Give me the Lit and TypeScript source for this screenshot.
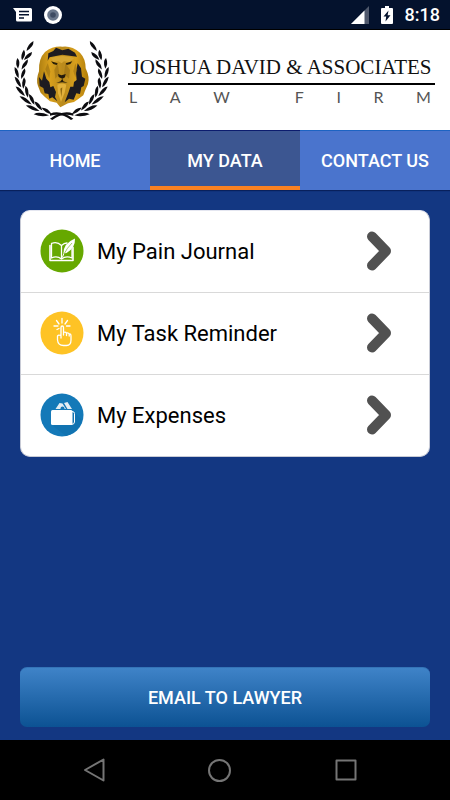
import { LitElement, html, css, svg } from "lit";
import { customElement, property } from "lit/decorators.js";

// Laurel leaves of the left branch: centre x, centre y, direction in degrees, half length.
const LEAVES: number[][] = [
  [90, 138, 125, 18],
  [69, 165, 100, 16],
  [84, 168, 136, 17],
  [53, 190, 86, 16],
  [74, 193, 122, 18],
  [50, 218, 70, 18],
  [69, 221, 108, 17],
  [54, 246, 58, 19],
  [71, 249, 94, 17],
  [61, 274, 45, 20],
  [80, 275, 78, 18],
  [77, 301, 34, 22],
  [95, 298, 62, 18],
  [98, 325, 22, 22],
  [115, 318, 48, 18],
  [124, 344, 4, 23],
  [140, 333, 32, 18],
];

const branch = svg`
  ${LEAVES.map(
    ([x, y, a, l]) => svg`
      <path transform="translate(${x} ${y}) rotate(${a})"
        d=${`M${-l} 0Q${-l * 0.3} -11 ${l} 0Q${l * 0.1} 9 ${-l} 0Z`} />`
  )}
  <path d="M150 341Q180 328 220 356L213 360Q185 338 150 347Z" />`;

const emblem = svg`
  <svg class="emblem" viewBox="36 114 300 252" role="img" aria-label="Lion in a laurel wreath">
    <defs>
      <linearGradient id="gold" x1="0" x2="1" y1="0" y2="0">
        <stop offset="0" stop-color="#a87a10" />
        <stop offset=".25" stop-color="#d9a01c" />
        <stop offset=".5" stop-color="#b98a1c" />
        <stop offset=".75" stop-color="#d9a01c" />
        <stop offset="1" stop-color="#b07c08" />
      </linearGradient>
    </defs>
    <g fill="#0c0c10">${branch}</g>
    <g fill="#0c0c10" transform="translate(370 0) scale(-1 1)">${branch}</g>
    <path fill="url(#gold)" d="M187 140Q215 136 240 158Q257 176 257 205Q270 232 264 252L255 272L250 286L236 296L222 306L204 310L181 322L170 308L150 304L134 290L122 278L114 258Q107 240 117 214Q115 176 135 156Q158 138 187 140Z" />
    <path fill="#1d1b20" d="M160 153L178 147L187 151L205 146L225 158L231 170L187 164L149 172L143 182L145 160ZM160 153L168 143L178 147Z" />
    <path fill="#1d1b20" d="M117 231L126 242L132 214L139 236L148 246L151 262L160 258L168 276L165 291L172 304L157 292L148 296L145 282L134 280L130 264L119 258Z" />
    <path fill="#1d1b20" d="M233 190L243 205L246 230L256 236L251 258L244 262L240 282L229 280L221 299L207 296L194 307L205 278L211 260L220 260L222 246L230 240L228 218Z" />
    <path fill="#8f6810" d="M143 190L151 214L148 236L136 208ZM226 190L220 214L226 232L232 208ZM173 190L178 222L166 236L163 210ZM196 190L192 222L207 236L210 210Z" opacity=".5" />
    <path fill="#d6a632" d="M153 174Q187 162 223 174L208 187L192 184L185 190L175 184L160 187Z" />
    <path fill="#2a2008" d="M153 184L173 190L170 195L160 192ZM217 184L197 190L200 195L211 192Z" />
    <path fill="#241b0c" d="M174 222L185 226L197 222L195 232L187 236L176 231ZM169 249L182 244L187 236L190 244L203 249L187 247Z" />
    <path fill="#e3b13a" d="M172 254Q186 247 199 254L194 278L183 306L174 280Z" />
    <path fill="#8f6810" d="M181 266L187 262L184 292Z" />
  </svg>`;

const journal = svg`
  <svg class="badge" viewBox="0 0 44 44" aria-hidden="true">
    <circle cx="22" cy="22" r="21.5" fill="#66a800" />
    <g fill="none" stroke="#fff" stroke-linejoin="round" stroke-linecap="round">
      <path stroke-width="1.3" d="M11.500 14.500Q17 12 21.500 16.500Q24 14 27 14M21.500 16.500V30M11.500 14.500V29Q17 26.500 21.500 30Q26 26.500 32 29V20" />
      <path stroke-width="1.600" d="M10 16.500V31.500H33V18.500" />
      <path stroke-width="1" d="M22.500 28Q24 22 28 18" />
    </g>
    <path fill="#fff" d="M35 9.500Q35.500 19 26.500 24L23.500 24.500Q23 14.500 35 9.500Z" />
    <path fill="none" stroke="#66a800" stroke-width=".6" d="M24 25Q27 19 32 14" />
  </svg>`;

const task = svg`
  <svg class="badge" viewBox="0 0 44 44" aria-hidden="true">
    <circle cx="22" cy="22" r="21.500" fill="#fec325" />
    <g fill="none" stroke="#fff" stroke-width="1.300" stroke-linejoin="round" stroke-linecap="round">
      <path d="M21 27V16.500Q21 15 22.200 15Q23.500 15 23.500 16.500V21.500Q25.500 20.500 26.500 22Q28.500 21.500 29.200 23Q31 22.500 31 25V29Q31 34.500 26.500 34.500H23.500Q18 34.500 17.500 29V25Q18 23.500 21 24.500M23.500 21.500V24M26.500 22V24.500M29.200 23V25" />
      <path d="M22 7.500V12M16.500 9.500L19 13M27.500 9.500L25 13M14 15H18M26.500 15H30M17 18.500L19 17.500" />
    </g>
  </svg>`;

const wallet = svg`
  <svg class="badge" viewBox="0 0 44 44" aria-hidden="true">
    <circle cx="22" cy="22" r="21.500" fill="#1479b8" />
    <path fill="#1173b1" d="M34 19L42 27Q38 40 26 43L13 33Z" />
    <path fill="#e4edf3" d="M15.500 16L19.500 10L22.500 10.500L26 16ZM24 10L27.500 9L32 16H27.500Z" />
    <circle cx="22.500" cy="15.500" r="2" fill="#1479b8" />
    <path fill="none" stroke="#fff" stroke-width="1" d="M32 18.500Q34.500 18.500 34.500 20.500V29Q34.500 31.500 31 31.500" />
    <rect x="11" y="17" width="21.500" height="15" rx="1.500" fill="#fff" />
  </svg>`;

const chevron = svg`
  <svg class="chevron" viewBox="0 0 26 40" aria-hidden="true">
    <path fill="none" stroke="#515151" stroke-width="10" stroke-linecap="round" stroke-linejoin="round" d="M6 5.500L20 20L6 34.500" />
  </svg>`;

@customElement("status-bar")
export class StatusBar extends LitElement {
  static styles = css`
    :host {
      display: flex;
      align-items: center;
      gap: 12px;
      box-sizing: border-box;
      height: 30px;
      padding: 0 10px 0 13px;
      background: #04122d;
      border-bottom: 1px solid #000;
      color: #fff;
      font: 500 18px/30px Roboto, sans-serif;
    }
    svg {
      flex: none;
      display: block;
    }
    .spacer {
      flex: 1;
    }
  `;

  render() {
    return html`
      <svg width="19" height="16" viewBox="0 0 19 16" aria-hidden="true">
        <path fill="#fff" d="M0 1H17.500Q19 1 19 2.500V13Q19 14.500 17.500 14.500H4.500Q3 14.500 3 13V5Z" />
        <path stroke="#04122d" stroke-width="1.500" d="M6 4.500H16M6 7.700H16M6 11H11" />
      </svg>
      <svg width="18" height="18" viewBox="0 0 18 18" aria-hidden="true">
        <circle cx="9" cy="9" r="9" fill="#fff" />
        <circle cx="9" cy="9" r="5.800" fill="#6b788c" />
        <circle cx="9" cy="9" r="2.800" fill="#3f4c63" />
      </svg>
      <span class="spacer"></span>
      <svg width="18" height="18" viewBox="0 0 18 18" aria-hidden="true">
        <path fill="#4f586c" d="M18 0V18H0Z" />
        <path fill="#fff" d="M13.500 4.500V18H0Z" />
      </svg>
      <svg width="12" height="18" viewBox="0 0 12 18" aria-hidden="true">
        <path fill="#fff" d="M4 0H8V2H11Q12 2 12 3V17Q12 18 11 18H1Q0 18 0 17V3Q0 2 1 2H4Z" />
        <path fill="#04122d" d="M7.500 4.500L2.500 10.500H5.200L4.500 15.500L9.500 9.200H6.600Z" />
      </svg>
      <time>8:18</time>
    `;
  }
}

@customElement("menu-row")
export class MenuRow extends LitElement {
  @property() label = "";
  @property({ attribute: false }) icon: unknown = null;

  static styles = css`
    :host {
      display: block;
    }
    .row {
      display: flex;
      align-items: center;
      gap: 13px;
      box-sizing: border-box;
      width: 100%;
      height: 81px;
      padding: 0 37px 1px 19px;
      border: 0;
      background: none;
      color: #000;
      font: 400 22px/28px Roboto, sans-serif;
      text-align: left;
    }
    .label {
      flex: 1;
      padding-top: 2px;
    }
    .badge {
      flex: none;
      width: 44px;
      height: 44px;
    }
    .chevron {
      flex: none;
      width: 26px;
      height: 40px;
    }
  `;

  render() {
    return html`
      <button class="row" type="button">
        ${this.icon}<span class="label">${this.label}</span>${chevron}
      </button>
    `;
  }
}

@customElement("app-root")
export class AppRoot extends LitElement {
  static styles = css`
    :host {
      display: flex;
      flex-direction: column;
      min-height: 100vh;
      background: #133782;
      font-family: Roboto, sans-serif;
    }
    .brand {
      display: flex;
      align-items: center;
      gap: 16px;
      height: 100px;
      padding: 0 15px 0 12px;
      background: #fff;
    }
    .emblem {
      flex: none;
      width: 100px;
      height: 84px;
    }
    .name {
      flex: 1;
      color: #111;
    }
    h1 {
      margin: 0;
      border-bottom: 2px solid #000;
      font: 400 21px/32px "Liberation Serif", serif;
      text-align: center;
      white-space: nowrap;
    }
    .tagline {
      display: flex;
      justify-content: space-between;
      margin: 0;
      padding: 0 4px 0 1px;
      color: #555;
      font: 400 16px/24px Lato, sans-serif;
    }
    .tabs {
      display: grid;
      grid-template-columns: repeat(3, 1fr);
      height: 60px;
      box-shadow: 0 1px 1px #08205c;
    }
    .tab {
      box-sizing: border-box;
      height: 60px;
      border-top: 1px solid #1d63c2;
      border-bottom: 4px solid #4a74cd;
      padding-top: 4px;
      background: #4a74cd;
      color: #fff;
      font: 500 18px/51px Roboto, sans-serif;
      text-align: center;
      text-decoration: none;
      white-space: nowrap;
    }
    .active {
      border-top-color: #0c1c6e;
      border-bottom-color: #fb8120;
      background: #3c5691;
    }
    main {
      flex: 1;
      display: flex;
      flex-direction: column;
      justify-content: space-between;
      gap: 20px;
      padding: 20px 20px 13px;
    }
    .card {
      margin: 0;
      padding: 0;
      list-style: none;
      border: 1px solid #c8cbd6;
      border-top-color: #e4e6f0;
      border-radius: 10px;
      background: #fff;
    }
    .card li + li {
      border-top: 1px solid #d9d9d9;
    }
    .email {
      height: 60px;
      border: 0;
      border-top: 1px solid #3474b8;
      border-radius: 7px;
      background: linear-gradient(#3f83c8, #0c5293);
      color: #fff;
      font: 500 18px/24px Roboto, sans-serif;
    }
    .keys {
      display: grid;
      grid-template-columns: repeat(3, 1fr);
      height: 60px;
      padding: 0 41px 0 31px;
      background: #000;
    }
    .key {
      display: grid;
      place-items: center;
      padding: 0;
      border: 0;
      background: none;
    }
    .key svg {
      width: 24px;
      height: 24px;
      fill: none;
      stroke: #757575;
      stroke-width: 2;
      stroke-linejoin: round;
    }
  `;

  render() {
    return html`
      <status-bar></status-bar>
      <header class="brand">
        ${emblem}
        <div class="name">
          <h1>JOSHUA DAVID &amp; ASSOCIATES</h1>
          <p class="tagline">
            ${[..."LAW FIRM"].map((c) => html`<span>${c}</span>`)}
          </p>
        </div>
      </header>
      <nav class="tabs">
        <a class="tab" href="#home">HOME</a>
        <a class="tab active" href="#data" aria-current="page">MY DATA</a>
        <a class="tab" href="#contact">CONTACT US</a>
      </nav>
      <main>
        <ul class="card">
          <li><menu-row label="My Pain Journal" .icon=${journal}></menu-row></li>
          <li><menu-row label="My Task Reminder" .icon=${task}></menu-row></li>
          <li><menu-row label="My Expenses" .icon=${wallet}></menu-row></li>
        </ul>
        <button class="email" type="button">EMAIL TO LAWYER</button>
      </main>
      <footer class="keys">
        <button class="key" type="button" aria-label="Back">
          <svg viewBox="0 0 24 24"><path d="M21.500 1.500V22.500L3 12Z" /></svg>
        </button>
        <button class="key" type="button" aria-label="Home">
          <svg viewBox="0 0 24 24"><circle cx="11.500" cy="12.500" r="10.500" /></svg>
        </button>
        <button class="key" type="button" aria-label="Recent apps">
          <svg viewBox="0 0 24 24"><rect x="2.500" y="2.500" width="19" height="19" /></svg>
        </button>
      </footer>
    `;
  }
}
